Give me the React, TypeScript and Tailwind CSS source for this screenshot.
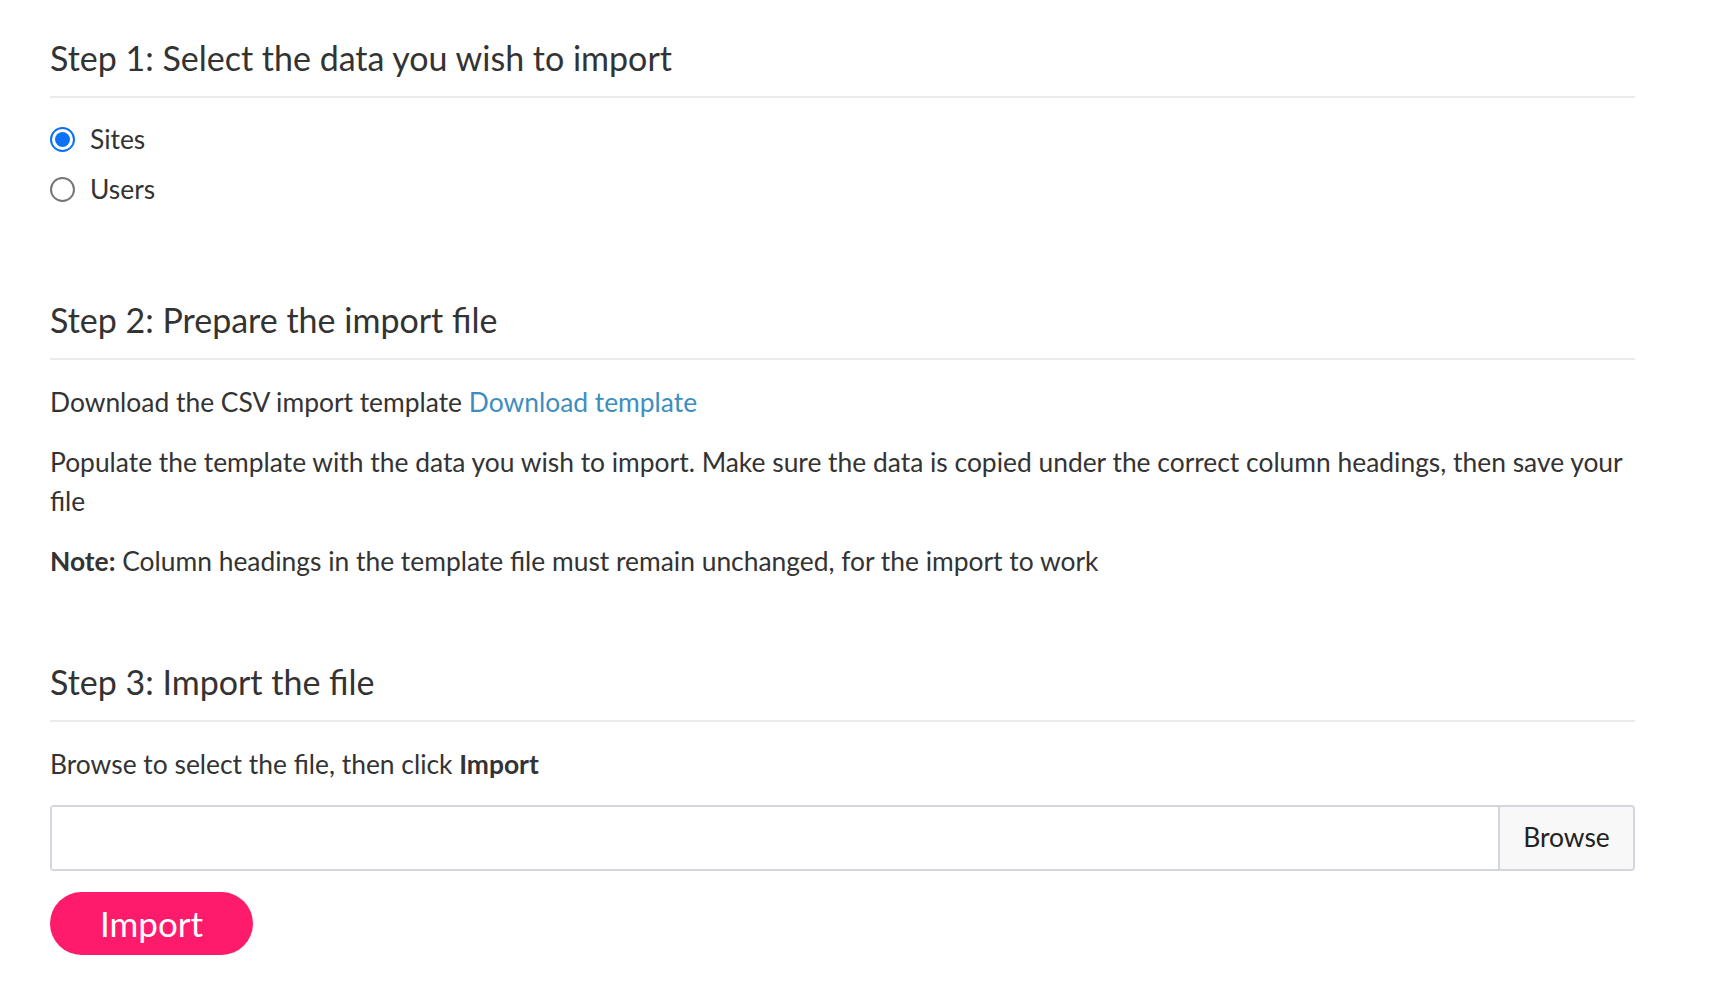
import { useState } from 'react';

const FONT = { fontFamily: 'Lato, "Noto Sans", sans-serif' };

function Radio({ checked, label, onSelect }: { checked: boolean; label: string; onSelect: () => void }) {
  return (
    <button type="button" onClick={onSelect} className="flex h-[39px] items-center gap-[15px] text-left">
      <span
        className={`flex h-[25px] w-[25px] items-center justify-center rounded-full border-2 ${
          checked ? 'border-[#0b72f5]' : 'border-[#767676]'
        }`}
      >
        {checked && <span className="h-[15px] w-[15px] rounded-full bg-[#0b72f5]" />}
      </span>
      <span className="text-[26.4px] leading-[39px] text-[#333]">{label}</span>
    </button>
  );
}

function StepHeading({ children }: { children: string }) {
  return (
    <h2 className="border-b-2 border-[#ebebeb] pb-[17px] text-[34px] leading-[42px] font-normal text-[#333]">
      {children}
    </h2>
  );
}

export default function App() {
  const [dataType, setDataType] = useState<'sites' | 'users'>('sites');

  return (
    <div className="min-h-screen bg-white pl-[50px] pr-[77px] pt-[37px]" style={FONT}>
      {/* Step 1 */}
      <section>
        <StepHeading>Step 1: Select the data you wish to import</StepHeading>
        <div className="mt-[22px] flex flex-col gap-[11px]">
          <Radio checked={dataType === 'sites'} label="Sites" onSelect={() => setDataType('sites')} />
          <Radio checked={dataType === 'users'} label="Users" onSelect={() => setDataType('users')} />
        </div>
      </section>

      {/* Step 2 */}
      <section className="mt-[90px]">
        <StepHeading>Step 2: Prepare the import file</StepHeading>
        <div className="mt-[23px] space-y-[21px] text-[26.4px] leading-[39px] text-[#333]">
          <p>
            Download the CSV import template{' '}
            <a href="#" className="text-[#3d8ebf]">
              Download template
            </a>
          </p>
          <p>
            Populate the template with the data you wish to import. Make sure the data is copied under the correct
            column headings, then save your file
          </p>
          <p>
            <strong className="font-bold">Note:</strong> Column headings in the template file must remain unchanged, for
            the import to work
          </p>
        </div>
      </section>

      {/* Step 3 */}
      <section className="mt-[80px]">
        <StepHeading>Step 3: Import the file</StepHeading>
        <p className="mt-[23px] text-[26.4px] leading-[39px] text-[#333]">
          Browse to select the file, then click <strong className="font-bold">Import</strong>
        </p>
        <div className="mt-[21px] flex h-[66px] rounded-[4px] border-2 border-[#d3d6df]">
          <input type="text" readOnly className="flex-1 bg-white outline-none" />
          <button
            type="button"
            className="w-[135px] rounded-r-[3px] border-l-2 border-[#d3d6df] bg-[#f8f8f8] text-[26.4px] text-[#222]"
          >
            Browse
          </button>
        </div>
        <button
          type="button"
          className="mt-[21px] h-[63px] w-[203px] rounded-full bg-[#ff1b6b] text-[35px] text-white"
        >
          Import
        </button>
      </section>
    </div>
  );
}
